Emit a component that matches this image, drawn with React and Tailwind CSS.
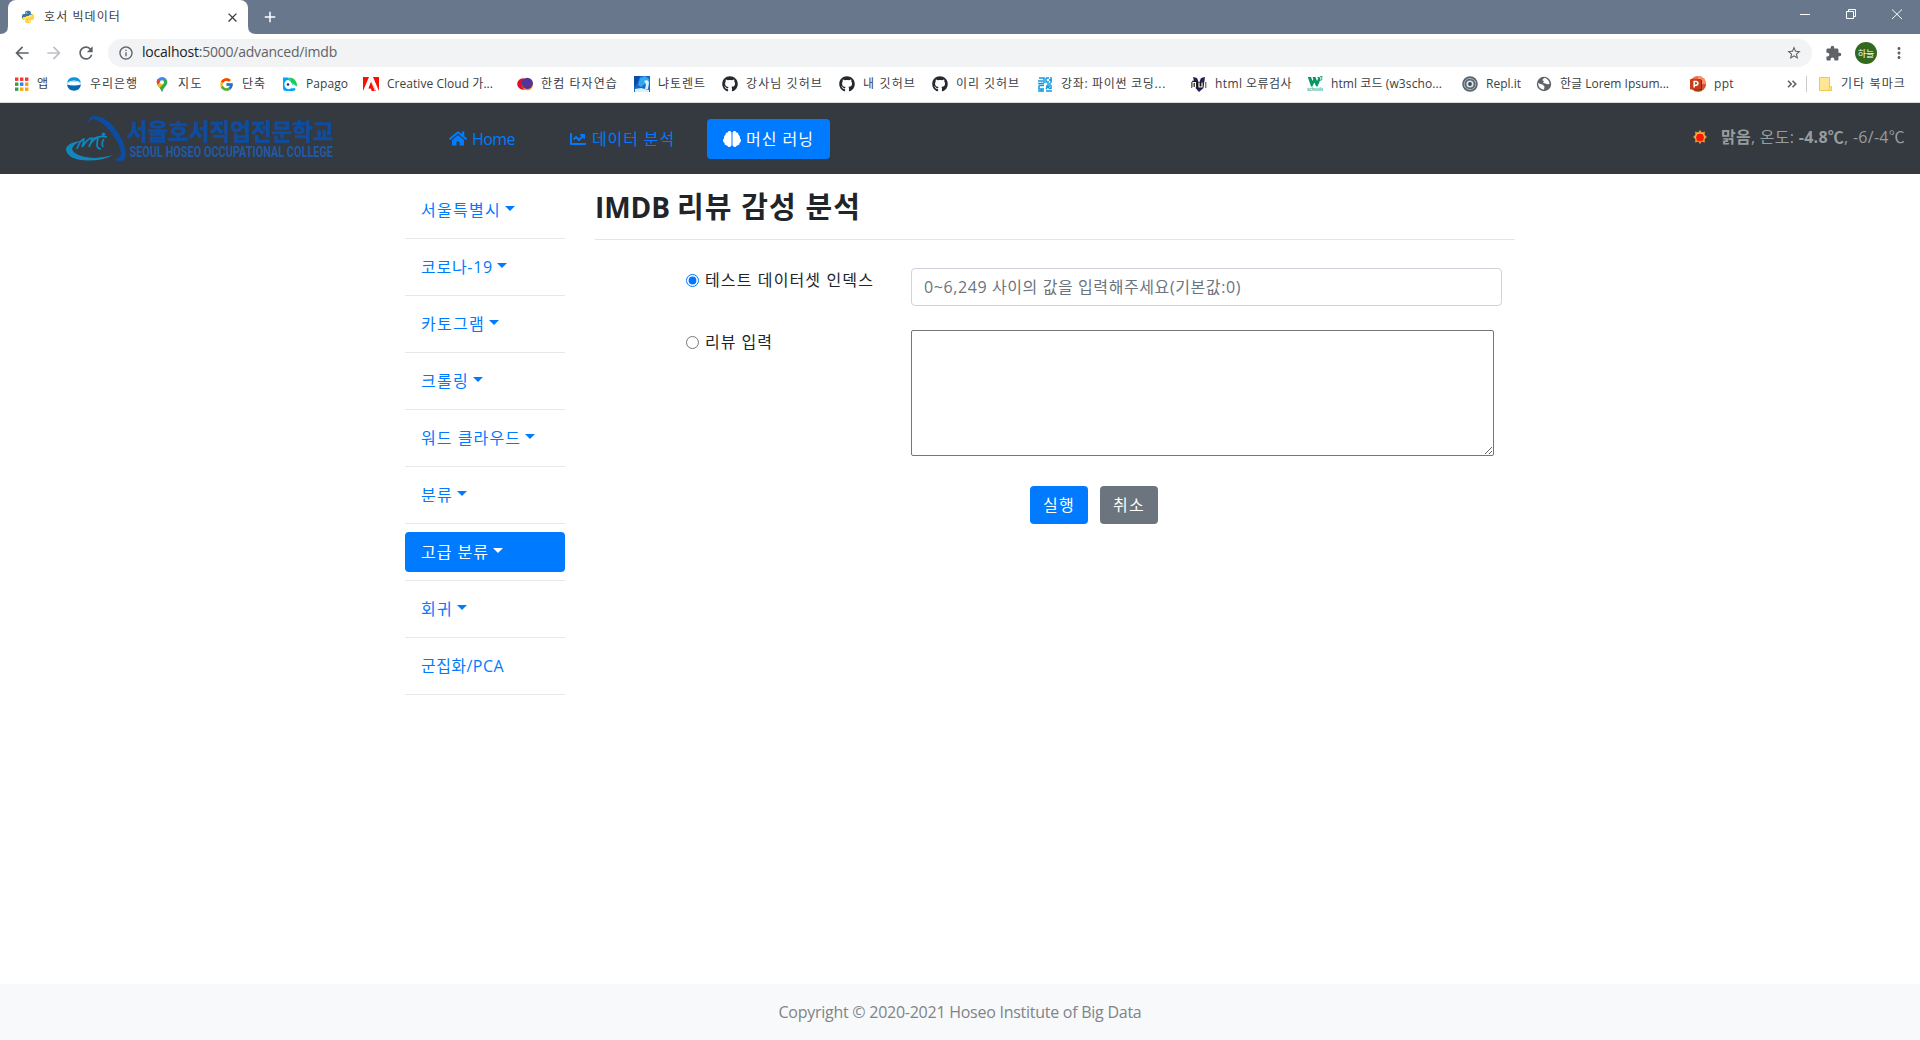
import { useLayoutEffect, useRef } from 'react';
import { FaHome, FaChartLine, FaBrain, FaGithub, FaPython } from 'react-icons/fa';
import { MdArrowBack, MdArrowForward, MdRefresh, MdInfoOutline, MdStarBorder, MdExtension, MdMoreVert, MdClose, MdAdd } from 'react-icons/md';
import { FcGoogle } from 'react-icons/fc';

// One line of text whose tracking is set so that it spans `w` pixels.
function Fit({ w, className = '', children }) {
  const ref = useRef(null);
  useLayoutEffect(() => {
    const el = ref.current;
    el.style.letterSpacing = '0px';
    const natural = el.getBoundingClientRect().width;
    el.style.letterSpacing = `${(w - natural) / el.textContent.length}px`;
  }, [w]);
  return (
    <span ref={ref} className={`inline-block shrink-0 whitespace-nowrap ${className}`}>
      {children}
    </span>
  );
}

const Svg = ({ children, vb = '0 0 16 16' }) => (
  <svg viewBox={vb} className="h-4 w-4">{children}</svg>
);

const AppsIcon = () => (
  <Svg>
    {['#f23b30', '#f23b30', '#f23b30', '#34a048', '#2a84f0', '#fb9a05', '#34a048', '#f9a80a', '#f9a80a'].map((c, i) => (
      <rect key={i} x={2 + (i % 3) * 5} y={1.5 + Math.floor(i / 3) * 5} width="3.4" height="3.4" fill={c} />
    ))}
  </Svg>
);
const WooriIcon = () => (
  <Svg>
    <path d="M1 6.500Q2.500 1.300 8 1.300T15 6.500Q11.500 4.500 8 4.500T1 6.500Z" fill="#0a94dc" />
    <path d="M1 8.500Q4 9.500 8 9.500T15 8.500Q14 14.700 8 14.700T1 8.500Z" fill="#0568b3" />
    <path d="M1 7.500Q4 5.300 8 5.300T15 7.500" stroke="#8fd0f0" strokeWidth=".8" fill="none" />
  </Svg>
);
const MapsIcon = () => (
  <Svg>
    <path d="M8 1a5.3 5.3 0 0 0-5.2 5.3c0 1.8.8 3 2 4.400L12 2.700A5.300 5.300 0 0 0 8 1Z" fill="#4285f4" />
    <path d="M3.900 2.800 6.300 4.900 3.500 8.800C2.300 6.500 2.500 4.500 3.900 2.800Z" fill="#ea4335" />
    <path d="M3.600 9 11.900 2.700C14.500 5.500 13.200 8.400 11.300 10.500 9.500 12.600 9 13.600 8.600 15.200Q8 16.400 7.400 15.200C6.900 13 5 11.500 3.600 9Z" fill="#34a853" />
    <path d="M3.600 9 6.300 5.800 9.700 7.600 5.700 12Q4.300 10.500 3.600 9Z" fill="#fbbc04" />
    <circle cx="8" cy="6.300" r="2" fill="#fff" />
  </Svg>
);
const PapagoIcon = () => (
  <Svg>
    <path d="M1 1.500H6L10 7 13.500 13.500Q12.500 15 10.500 15H4Q1 15 1 12Z" fill="#00a5ff" />
    <path d="M6.500 1.500Q15 1.500 15 10.500L9.500 7Z" fill="#19ce60" />
    <path d="M2.500 7Q4.500 2.500 8 5L10.500 8.500 9.500 12Q7.500 14 4.500 12.500Q2 10.500 2.500 7Z" fill="#fff" />
    <path d="M9.500 8.500 15 11.500 9.500 12.500Z" fill="#fff" />
    <circle cx="6" cy="8.500" r="1.300" fill="#133a5e" />
  </Svg>
);
const AdobeIcon = () => (
  <Svg>
    <rect y="1" width="16" height="14" fill="#fa0f00" />
    <path d="M6 1H10L16 15H13ZM6 1 0 15V16H9L8 12.500H5.500L8 6.300 11.500 15H12.500Z" fill="#fff" />
    <path d="M8 6.300 11.600 15H9.200L8.100 12.200H5.600Z" fill="#fa0f00" />
  </Svg>
);
const HancomIcon = () => (
  <Svg>
    <circle cx="6" cy="8" r="5.800" fill="#d9122f" />
    <circle cx="10.500" cy="8.900" r="5.400" fill="#f7941d" />
    <circle cx="10.300" cy="7.300" r="5.600" fill="#53349a" />
  </Svg>
);
const TorrentIcon = () => (
  <Svg>
    <rect width="16" height="16" fill="#1767c5" />
    <path d="M0 0H6L3 8 0 11Z" fill="#0a4aa8" />
    <path d="M6 2 11 0 15 3V10L11 8 7 11 4 9Z" fill="#38a6ee" />
    <path d="M10 5 13 4 15 6 14 13H11L12 8ZM1 13 7 12 15 14V16H1Z" fill="#d9f0ff" />
  </Svg>
);
const CodingIcon = () => (
  <Svg>
    <path
      d="M2 2H7V7M1 5H6M1 7.500H7M9 2H12M9 2V6H12M14 1V7M12 4H15M10 8H14M2 9.500H7M2 9.500V13H7M1 15H7M4.500 13V15M9 10H13M11 10 9 13M11 11 13 13M14 9V13M9 15H15"
      stroke="#1199e0" strokeWidth="1.500" fill="none"
    />
  </Svg>
);
const NuIcon = () => (
  <Svg>
    <path d="M2 1 6 2 8 7 10 2 14 1 12.500 12 8 16 4.500 12Z" fill="#232058" />
    <path d="M2.500 11V6H4.500L7 10.500M7.500 6V11H10.500V6" stroke="#111" strokeWidth="2.600" fill="none" />
    <path d="M2 11.500V6.500H4.500V11.500M8 6.500V11H11V6.500M14 6V11.500" stroke="#fff" strokeWidth="1.200" fill="none" />
    <path d="M14.800 6V12M.7 6V12" stroke="#333" strokeWidth=".9" />
  </Svg>
);
const W3Icon = () => (
  <Svg>
    <path d="M.8 1H4L5.500 5 6.300 3 5.500 1H8.500L10 5 11 3 10.500 1H12.500L13.500 3.500 10.500 10.500H9.300L7.300 6.500 5.300 10.500H4Z" fill="#059862" />
    <path d="M13 .7H15.300L14.200 2.300Q16.300 3.600 13.400 4.500" stroke="#059862" strokeWidth=".9" fill="none" />
    <text x="0" y="15.300" fontSize="4.600" fontWeight="700" textLength="16" lengthAdjust="spacingAndGlyphs" fill="#3bae84" fontFamily="Liberation Sans, sans-serif">schools</text>
  </Svg>
);
const ReplIcon = () => (
  <Svg>
    <circle cx="8" cy="8" r="7.800" fill="#566570" />
    <path d="M3 11A5.800 5.800 0 0 1 8 2.400Q12 2.500 13.500 6M13 5A5.800 5.800 0 0 1 8 13.700Q4 13.500 2.500 10" stroke="#b5bdc3" strokeWidth=".9" fill="none" />
    <circle cx="8" cy="8" r="3.600" fill="#dfe4e7" />
    <circle cx="8" cy="8" r="1.900" fill="#3d4a54" />
  </Svg>
);
const PptIcon = () => (
  <Svg>
    <circle cx="8" cy="8" r="8" fill="#ed6c47" />
    <path d="M8 0A8 8 0 0 1 16 8H8Z" fill="#ff8f6b" />
    <path d="M.5 10A8 8 0 0 0 16 8H8Z" fill="#d35230" />
    <rect x="4" y="3.500" width="8" height="11" rx="1" fill="#7d2714" />
    <rect x="0" y="3" width="11" height="10.500" rx="1" fill="#c43e1c" />
    <path d="M4.200 11.500V5.500H6Q7.900 5.500 7.900 7.300T6 9.200H4.500" stroke="#fff" strokeWidth="1.500" fill="none" />
  </Svg>
);
const FolderIcon = () => (
  <Svg>
    <path d="M2.500 1.500H12.500V10.500H14.500V14.500H2.500Z" fill="#ffe694" stroke="#eec952" />
    <path d="M12.500 10.500Q11.500 12.500 12.500 14.500" stroke="#eec952" fill="none" />
  </Svg>
);
const Github = () => <FaGithub className="h-4 w-4 text-[#24292e]" />;
const Globe = () => (
  <Svg>
    <circle cx="8" cy="8" r="7.200" fill="#5f6368" />
    <path d="M9 1.800Q6 3 6.500 4.500L8 5 7 7 9.500 7.500Q11 8.500 13.500 8Q13.500 4 9 1.800ZM2 7Q4.500 8 6.500 8.500L8.500 10.500 8 13.800Q2.500 13 2 7Z" fill="#fff" />
  </Svg>
);

// [icon, label, width of the label, width of the whole entry]
const bookmarks = [
  [AppsIcon, '앱', 12, 53],
  [WooriIcon, '우리은행', 48, 88],
  [MapsIcon, '지도', 25, 64],
  [() => <FcGoogle className="h-[15px] w-[15px]" />, '단축', 24, 64],
  [PapagoIcon, 'Papago', 42, 81],
  [AdobeIcon, 'Creative Cloud 가...', 106, 154],
  [HancomIcon, '한컴 타자연습', 77, 117],
  [TorrentIcon, '냐토렌트', 48, 88],
  [Github, '강사님 깃허브', 77, 117],
  [Github, '내 깃허브', 53, 93],
  [Github, '이리 깃허브', 64, 105],
  [CodingIcon, '강좌: 파이썬 코딩...', 105, 154],
  [NuIcon, 'html 오류검사', 77, 116],
  [W3Icon, 'html 코드 (w3scho...', 111, 155],
  [ReplIcon, 'Repl.it', 35, 74],
  [Globe, '한글 Lorem Ipsum...', 109, 154],
  [PptIcon, 'ppt', 20, 97],
];

function BrowserChrome() {
  return (
    <header className="text-[12px] text-[#3c4043]">
      <div className="flex h-[34px] justify-between bg-[#68778b] text-white">
        <div className="flex">
          <svg viewBox="0 0 8 34" className="h-[34px] w-2"><path d="M0 34Q8 34 8 26V34Z" fill="#fff" /></svg>
          <div className="flex w-60 items-center rounded-t-lg bg-white pl-[14px] text-[#3c4043]">
            <svg className="h-0 w-0">
              <linearGradient id="py" x1="0" y1="0" x2="0.350" y2="1">
                <stop offset="0.520" stopColor="#3776ab" />
                <stop offset="0.520" stopColor="#ffd43b" />
              </linearGradient>
            </svg>
            <FaPython className="-ml-px h-[14px] w-[14px]" fill="url(#py)" />
            <Fit w={77} className="ml-[9px] -mt-px">호서 빅데이터</Fit>
            <MdClose className="ml-auto mr-2 h-[15px] w-[15px]" />
          </div>
          <svg viewBox="0 0 8 34" className="h-[34px] w-2"><path d="M8 34Q0 34 0 26V34Z" fill="#fff" /></svg>
          <MdAdd className="ml-[5px] mt-[8px] h-[18px] w-[18px]" />
        </div>
        <svg viewBox="0 0 138 34" className="h-[34px] w-[138px]" fill="none" stroke="#fff">
          <path d="M18 14.500H28M64.500 11.500H71.500V18.500H64.500ZM66.500 11V9.500H73.500V16.500H72M110 9.500 120 19M120 9.500 110 19" />
        </svg>
      </div>
      <div className="flex h-[34px] items-center bg-white pt-1 text-[#5f6368]">
        <MdArrowBack className="ml-[12px] h-[20px] w-[20px]" />
        <MdArrowForward className="ml-3 h-[20px] w-[20px] text-[#bdc1c6]" />
        <MdRefresh className="ml-3 h-[20px] w-[20px]" />
        <div className="ml-3 flex h-7 w-[1704px] items-center rounded-full bg-[#f1f3f4] pl-[10px] pr-[10px]">
          <MdInfoOutline className="h-4 w-4" />
          <Fit w={195} className="-mt-[2px] ml-2 text-[14px]"><span className="text-[#202124]">localhost</span>:5000/advanced/imdb</Fit>
          <MdStarBorder className="ml-auto h-4 w-4" />
        </div>
        <MdExtension className="ml-[13px] h-[17px] w-[17px]" />
        <div className="ml-[13px] flex h-[22px] w-[22px] items-center justify-center rounded-full bg-[#33691e] text-[9px] leading-none text-white">하늘</div>
        <MdMoreVert className="ml-[13px] h-[18px] w-[18px]" />
      </div>
      <div className="flex h-[35px] items-center border-b border-[#d8dadc] bg-white pl-[13px] pb-[2px]">
        {bookmarks.map(([Icon, label, w, total], i) => (
          <div key={i} className="flex shrink-0 items-center gap-2" style={{ width: total }}>
            <span className="flex w-4 shrink-0 justify-center"><Icon /></span>
            <Fit w={w}>{label}</Fit>
          </div>
        ))}
        <svg viewBox="0 0 10 8" className="h-2 w-[10px]" fill="none" stroke="#5f6368" strokeWidth="1.600"><path d="M1 .8 4.200 4 1 7.200M5.500 .8 8.700 4 5.500 7.200" /></svg>
        <div className="ml-[9px] h-4 w-px bg-[#c8cacc]" />
        <div className="ml-[10px] flex items-center gap-2"><FolderIcon /><Fit w={65}>기타 북마크</Fit></div>
      </div>
    </header>
  );
}

const CollegeLogo = () => (
  <svg viewBox="66 115 268 47" className="ml-[66px] h-[47px] w-[268px] overflow-visible">
    <path d="M88 123Q88 116 95 116Q104 116 113 126Q126 142 126 155Q125 161 120 161Q117 161.500 114 159Q120 159 121 154Q121 145 110 131Q101 120 93 119Q90 119.500 88 123Z" fill="#0d4da1" />
    <path d="M84 140.500Q66 142 66 150Q68 160 88 160.500Q104 160.500 113 155Q96 160 83 156.500Q73 154 72 149Q73 143 84 140.500Z" fill="#1287bd" />
    <path d="M77 149Q80 140 84 139Q84 142 82 147M83 146Q88 138 92 138Q92 141 89 147M89 146Q94 138 98 138Q97 142 97 146Q98 149 101 149M93 139Q100 135 107 137M104 139Q101 143 103 147" stroke="#1287bd" strokeWidth="1.700" fill="none" />
    <circle cx="103.500" cy="134.200" r="1.700" fill="#1287bd" />
    <text x="127" y="139.500" fontSize="22.500" fontWeight="700" textLength="207" lengthAdjust="spacingAndGlyphs" fill="#0d4da1" stroke="#0d4da1" strokeWidth=".5" fontFamily="Noto Sans CJK KR, sans-serif">서울호서직업전문학교</text>
    <text x="129.500" y="156.500" fontSize="14.500" fontWeight="700" textLength="203.500" lengthAdjust="spacingAndGlyphs" fill="#2059a6" fontFamily="Roboto, sans-serif">SEOUL HOSEO OCCUPATIONAL COLLEGE</text>
  </svg>
);

const SunIcon = () => (
  <svg viewBox="0 0 16 16" className="h-4 w-4">
    <path d="M8 .8 9.700 3.200 13 2.500 12.700 5.700 15 8 12.700 10.300 13 13.500 9.700 12.800 8 15.200 6.300 12.800 3 13.500 3.300 10.300 1 8 3.300 5.700 3 2.500 6.300 3.200Z" fill="#d9923a" />
    <circle cx="8" cy="8" r="4.600" fill="#ffd24a" />
    <circle cx="8" cy="8.400" r="3.900" fill="#fb1505" />
  </svg>
);

function NavBar() {
  return (
    <nav className="flex h-[71px] items-center bg-[#343a40] text-[16px] text-[#007bff]">
      <CollegeLogo />
      <a className="ml-[115px] flex items-center gap-[5px]"><FaHome className="h-[17px] w-[18px]" /><Fit w={43}>Home</Fit></a>
      <a className="ml-[55px] flex items-center gap-[6px]"><FaChartLine className="h-4 w-4" /><Fit w={83}>데이터 분석</Fit></a>
      <a className="ml-[32px] flex h-10 w-[123px] items-center gap-[5px] rounded bg-[#007bff] pl-4 text-white"><FaBrain className="h-[18px] w-[18px]" /><Fit w={68}>머신 러닝</Fit></a>
      <div className="ml-auto mr-[15px] flex items-center gap-[13px] pb-[3px] text-[#999c9f]">
        <SunIcon />
        <Fit w={184}><b>맑음</b>, 온도: <b>-4.8℃</b>, -6/-4℃</Fit>
      </div>
    </nav>
  );
}

const menu = [
  ['서울특별시', 80], ['코로나-19', 72], ['카토그램', 64], ['크롤링', 48], ['워드 클라우드', 100],
  ['분류', 32], ['고급 분류', 68], ['회귀', 32], ['군집화/PCA', 83],
];

function SideMenu() {
  return (
    <ul className="w-40 pt-2 text-[16px] text-[#007bff]">
      {menu.map(([label, w]) => (
        <li key={label} className="border-b border-[#e6e8ea] py-2">
          <a className={`flex h-10 items-center gap-1 rounded pl-4 ${label === '고급 분류' ? 'bg-[#007bff] text-white' : ''}`}>
            <Fit w={w} className="-mt-px">{label}</Fit>
            {label !== '군집화/PCA' && <i className="-mt-[3px] border-x-[5px] border-t-[5px] border-x-transparent border-t-current" />}
          </a>
        </li>
      ))}
    </ul>
  );
}

function ReviewForm() {
  return (
    <section className="ml-[30px] w-[920px] text-[16px] text-[#212529]">
      <h3 className="flex h-[66px] items-center gap-[7px] border-b border-[#e5e5e5] text-[28px] font-bold">
        <Fit w={75}>IMDB</Fit>
        <Fit w={184} className="text-[29px]">리뷰 감성 분석</Fit>
      </h3>
      <div className="mt-7 flex">
        <label className="ml-[91px] flex h-6 w-[225px] items-center gap-[6px]">
          <input type="radio" name="mode" defaultChecked className="h-[13px] w-[13px] accent-[#0075ff]" />
          <Fit w={169}>테스트 데이터셋 인덱스</Fit>
        </label>
        <div className="flex h-[38px] w-[591px] items-center rounded border border-[#ced4da] pl-3 text-[#6c757d]">
          <Fit w={317}>0~6,249 사이의 값을 입력해주세요(기본값:0)</Fit>
        </div>
      </div>
      <div className="mt-6 flex">
        <label className="ml-[91px] flex h-6 w-[225px] items-center gap-[6px]">
          <input type="radio" name="mode" className="h-[13px] w-[13px]" />
          <Fit w={68}>리뷰 입력</Fit>
        </label>
        <textarea className="h-[126px] w-[583px] rounded-[2px] border border-[#767676] outline-none" />
      </div>
      <div className="mt-[30px] ml-[435px] flex gap-3 text-white">
        <button className="flex h-[38px] w-[58px] items-center justify-center rounded bg-[#007bff]"><Fit w={32}>실행</Fit></button>
        <button className="flex h-[38px] w-[58px] items-center justify-center rounded bg-[#6c757d]"><Fit w={32}>취소</Fit></button>
      </div>
    </section>
  );
}

export default function App() {
  return (
    <div className="flex h-[1040px] w-[1920px] flex-col overflow-hidden bg-white leading-6 [font-family:'Open_Sans','Noto_Sans_CJK_KR',sans-serif]">
      <BrowserChrome />
      <NavBar />
      <main className="flex grow pl-[405px]">
        <SideMenu />
        <ReviewForm />
      </main>
      <footer className="flex h-14 items-center justify-center bg-[#f8f9fa] text-[16px] text-[#808488]">
        <Fit w={363}>Copyright © 2020-2021 Hoseo Institute of Big Data</Fit>
      </footer>
    </div>
  );
}
